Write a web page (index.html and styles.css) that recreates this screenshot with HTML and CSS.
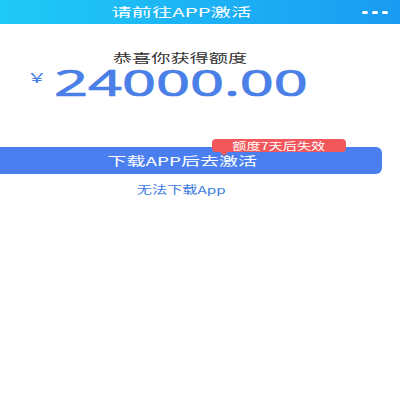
FILE: index.html
```html
<!DOCTYPE html>
<html lang="zh-CN">
<head>
    <meta charset="UTF-8">
    <meta name="viewport" content="width=device-width, initial-scale=1.0">
    <title>请前往APP激活</title>
    <link rel="stylesheet" href="styles.css">
</head>
<body>
    <header class="topbar">
        <h1 class="title"><span>请前往APP激活</span></h1>
        <div class="more"><i></i><i></i><i></i></div>
    </header>

    <main class="content">
        <p class="greet"><span>恭喜你获得额度</span></p>

        <div class="amount">
            <span class="currency">¥</span>
            <span class="num">24000.00</span>
        </div>

        <div class="action">
            <span class="badge"><span>额度7天后失效</span></span>
            <button class="download"><span>下载APP后去激活</span></button>
        </div>

        <a class="fallback" href="#"><span>无法下载App</span></a>
    </main>
</body>
</html>
```

FILE: styles.css
```css
body {
    margin: 0;
    padding: 0;
    background-color: #fff;
    font-family: "Noto Sans CJK SC", "Noto Sans", sans-serif;
}

.topbar {
    height: 24px;
    display: flex;
    align-items: center;
    background: linear-gradient(90deg, #1fcaf6, #1a9bf2);
    color: #fff;
}

.title {
    flex: 1;
    margin: 0;
    font-size: 12px;
    font-weight: normal;
    line-height: 24px;
    text-align: center;
}

.title span {
    display: inline-block;
    transform: scaleX(1.7);
}

.more {
    width: 26px;
    margin-right: 12px;
    display: flex;
    gap: 4px;
}

.more i {
    width: 6px;
    height: 3px;
    border-radius: 2px;
    background-color: #fff;
}

.content {
    padding-top: 27px;
}

.greet {
    margin: 0;
    padding-right: 40px;
    font-size: 12px;
    line-height: 14px;
    color: #333;
    text-align: center;
}

.greet span {
    display: inline-block;
    transform: scaleX(1.6);
}

.amount {
    margin-top: 5px;
    padding-left: 30px;
    height: 26px;
    line-height: 26px;
    color: #4a7fe8;
    white-space: nowrap;
}

.currency {
    display: inline-block;
    vertical-align: top;
    font-family: "Noto Sans", sans-serif;
    font-size: 15px;
    line-height: 15px;
    transform: scaleX(1.6);
    transform-origin: left;
}

.num {
    display: inline-block;
    vertical-align: top;
    margin-left: 12px;
    font-family: "Noto Sans", sans-serif;
    font-size: 36px;
    line-height: 26px;
    -webkit-text-stroke: 0.7px #4a7fe8;
    transform: scaleX(1.65);
    transform-origin: left;
}

.action {
    position: relative;
    margin-top: 51px;
}

.download {
    display: block;
    width: 382px;
    height: 27px;
    padding: 0 18px 0 0;
    border: none;
    border-radius: 0 6px 6px 0;
    background-color: #4b7ff0;
    color: #fff;
    font-family: inherit;
    font-size: 12px;
    text-align: center;
}

.download span {
    display: inline-block;
    transform: scaleX(1.58);
}

.badge {
    position: absolute;
    top: -8px;
    left: 212px;
    width: 134px;
    height: 13px;
    border-radius: 4px;
    background-color: #f2585b;
    color: #fff;
    font-size: 10px;
    line-height: 13px;
    text-align: center;
    z-index: 1;
}

.badge span {
    display: inline-block;
    transform: scaleX(1.42);
}

.badge::after {
    content: "";
    position: absolute;
    left: 8px;
    bottom: -4px;
    border-left: 4px solid transparent;
    border-right: 4px solid transparent;
    border-top: 4px solid #f2585b;
}

.fallback {
    display: block;
    margin-top: 8px;
    padding-right: 38px;
    font-size: 11px;
    line-height: 14px;
    color: #3f7de2;
    text-decoration: none;
    text-align: center;
}

.fallback span {
    display: inline-block;
    transform: scaleX(1.38);
}
```
